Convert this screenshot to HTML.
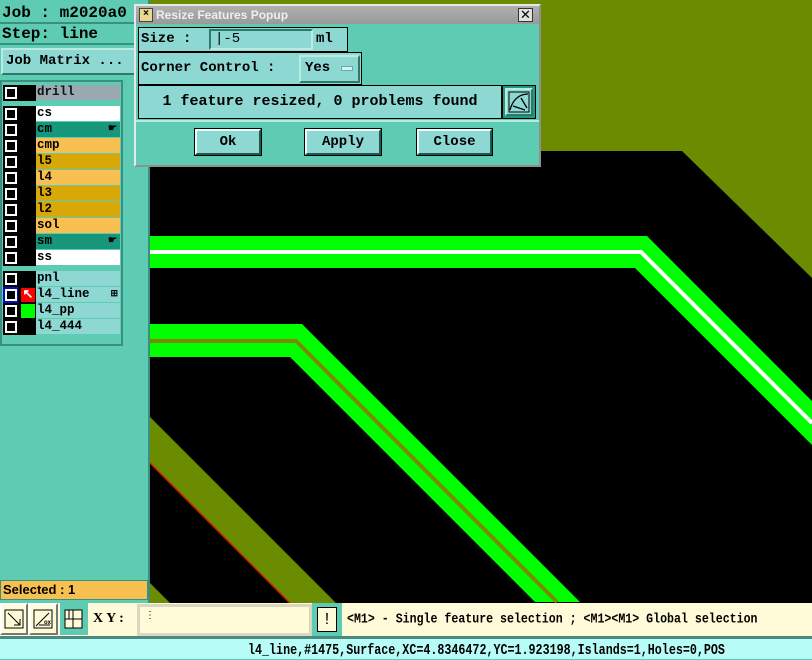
<!DOCTYPE html>
<html><head><meta charset="utf-8"><style>
*{margin:0;padding:0;box-sizing:border-box}
body{width:812px;height:659px;overflow:hidden;background:#5ecbb3;position:relative;font-family:"Liberation Mono",monospace;font-weight:bold;color:#000}
.a{position:absolute}
.bev{border:2px solid;border-color:#b8ece0 #2e7a68 #2e7a68 #b8ece0}
.sunk{border:2px solid;border-color:#2e7a68 #b8ece0 #b8ece0 #2e7a68}
.row{position:absolute;left:2px;width:118px;height:16px}
.cb{position:absolute;left:1px;top:0px;width:15px;height:16px;background:#000}
.cb i{position:absolute;left:2px;top:2px;width:12px;height:12px;background:#000;border:2px solid #fff;display:block}
.blk{position:absolute;left:16px;top:0;width:18px;height:16px;background:#000}
.nm{position:absolute;left:34px;top:0;width:84px;height:15px;font-size:12.5px;line-height:15px;padding-left:1px}
.btn{position:absolute;height:26px;background:#8ed8d4;border:2px solid;border-color:#e0fffa #1a5a50 #1a5a50 #e0fffa;outline:1px solid #000;font-size:14px;text-align:center;line-height:22px}
</style></head><body>
<svg class="a" style="left:150px;top:0" width="662" height="604" viewBox="150 0 662 604">
<rect x="150" y="0" width="662" height="604" fill="#000"/>
<polygon points="150,0 812,0 812,278 682,151 150,151" fill="#6b8c00"/>
<polygon points="150,236 647,236 812,401 812,445 635,268 150,268" fill="#00ff00"/>
<polyline points="150,252 641,252 812,423" fill="none" stroke="#fff" stroke-width="4"/>
<polygon points="150,324 302,324 580,602 535,602 290,357 150,357" fill="#00ff00"/>
<polyline points="150,341 296,341 557,602" fill="none" stroke="#7a8a00" stroke-width="4"/>
<polygon points="150,417 337,604 290,604 150,463" fill="#6b8c00"/>
<line x1="150" y1="463" x2="291" y2="604" stroke="#d02000" stroke-width="1.5"/>
<polygon points="150,583 171,604 150,604" fill="#6b8c00"/>
</svg>
<div class="a" style="left:0;top:0;width:150px;height:604px;background:#5ecbb3;border-right:2px solid #3a8f7e"></div>
<div class="a" style="left:2px;top:3px;font-size:16px;line-height:20px">Job : m2020a0</div>
<div class="a" style="left:0;top:22px;width:148px;height:2px;background:#3a8f7e"></div>
<div class="a" style="left:2px;top:24px;font-size:16px;line-height:20px">Step: line</div>
<div class="a" style="left:0;top:43px;width:148px;height:2px;background:#3a8f7e"></div>
<div class="a bev" style="left:1px;top:48px;width:135px;height:27px;font-size:14px;line-height:22px;padding-left:3px;background:#8ed8d4;white-space:nowrap">Job Matrix ...</div>
<div class="a" style="left:0;top:80px;width:123px;height:266px;border:2px solid #3a8f7e;background:#5ecbb3"></div>
<div class="row" style="top:85px"><div class="cb"><i></i></div><div class="blk"></div><div class="nm" style="background:#9aa8b0;color:#111">drill</div></div>
<div class="row" style="top:106px"><div class="cb"><i></i></div><div class="blk"></div><div class="nm" style="background:#fff">cs</div></div>
<div class="row" style="top:122px"><div class="cb"><i></i></div><div class="blk"></div><div class="nm" style="background:#16967a">cm<span style="position:absolute;right:3px;font-size:10px">&#9755;</span></div></div>
<div class="row" style="top:138px"><div class="cb"><i></i></div><div class="blk"></div><div class="nm" style="background:#f8c050">cmp</div></div>
<div class="row" style="top:154px"><div class="cb"><i></i></div><div class="blk"></div><div class="nm" style="background:#d8a808">l5</div></div>
<div class="row" style="top:170px"><div class="cb"><i></i></div><div class="blk"></div><div class="nm" style="background:#f8c050">l4</div></div>
<div class="row" style="top:186px"><div class="cb"><i></i></div><div class="blk"></div><div class="nm" style="background:#d8a808">l3</div></div>
<div class="row" style="top:202px"><div class="cb"><i></i></div><div class="blk"></div><div class="nm" style="background:#d8a808">l2</div></div>
<div class="row" style="top:218px"><div class="cb"><i></i></div><div class="blk"></div><div class="nm" style="background:#f8c050">sol</div></div>
<div class="row" style="top:234px"><div class="cb"><i></i></div><div class="blk"></div><div class="nm" style="background:#16967a">sm<span style="position:absolute;right:3px;font-size:10px">&#9755;</span></div></div>
<div class="row" style="top:250px"><div class="cb"><i></i></div><div class="blk"></div><div class="nm" style="background:#fff">ss</div></div>
<div class="row" style="top:271px"><div class="cb"><i></i></div><div class="blk"></div><div class="nm" style="background:#8ed8d4">pnl</div></div>
<div class="row" style="top:287px"><div class="cb" style="background:#0010c0"><i></i></div><div class="blk"><div class="a" style="left:3px;top:1px;width:14px;height:14px;background:#f00;color:#fff;font-size:13px;line-height:13px;text-align:center">&#8598;</div></div><div class="nm" style="background:#8ed8d4">l4_line<span style="position:absolute;right:2px;font-size:9px">&#8862;</span></div></div>
<div class="row" style="top:303px"><div class="cb"><i></i></div><div class="blk"><div class="a" style="left:3px;top:1px;width:14px;height:14px;background:#00ff00"></div></div><div class="nm" style="background:#8ed8d4">l4_pp</div></div>
<div class="row" style="top:319px"><div class="cb"><i></i></div><div class="blk"></div><div class="nm" style="background:#8ed8d4">l4_444</div></div>
<div class="a" style="left:0;top:580px;width:148px;height:20px;background:#f8c050;border:1px solid #3a8f7e;font-size:13px;line-height:18px;padding-left:2px;font-family:'Liberation Sans Narrow','Liberation Sans',sans-serif">Selected : 1</div>
<div class="a" style="left:134px;top:4px;width:407px;height:163px;background:#5ecbb3;border:2px solid;border-color:#e8e8e8 #909090 #909090 #e8e8e8"></div>
<div class="a" style="left:136px;top:6px;width:403px;height:18px;background:linear-gradient(#b0b0b0,#9a9a9a)"></div>
<div class="a" style="left:139px;top:8px;width:14px;height:14px;background:#e8d890;border:1px solid #444;font-size:10px;line-height:12px;text-align:center">&#215;</div>
<div class="a" style="left:156px;top:7px;color:#eeeeee;font-family:'Liberation Sans',sans-serif;font-size:12px;line-height:16px">Resize Features Popup</div>
<div class="a" style="left:518px;top:8px;width:15px;height:14px;background:#e0e0e0;border:1px solid #333;font-family:'Liberation Sans',sans-serif;font-size:13px;line-height:12px;text-align:center;font-weight:normal">&#10005;</div>
<div class="a" style="left:138px;top:27px;width:210px;height:25px;border:1px solid #000;background:#8ed8d4"></div>
<div class="a" style="left:141px;top:31px;font-size:14px;line-height:16px">Size :</div>
<div class="a sunk" style="left:209px;top:29px;width:104px;height:21px;background:#8ed8d4;font-size:14px;line-height:16px;padding-left:4px;font-weight:normal">|-5</div>
<div class="a" style="left:316px;top:31px;font-size:14px;line-height:16px">ml</div>
<div class="a" style="left:138px;top:52px;width:224px;height:33px;border:1px solid #000;background:#8ed8d4"></div>
<div class="a" style="left:141px;top:60px;font-size:14px;line-height:16px">Corner Control :</div>
<div class="a bev" style="left:299px;top:55px;width:61px;height:28px;background:#8ed8d4;font-size:14px;line-height:23px;padding-left:4px">Yes<span class="a" style="left:40px;top:9px;width:12px;height:5px;background:#d8f0ee;border:1px solid #6aa"></span></div>
<div class="a" style="left:138px;top:85px;width:364px;height:34px;border:1px solid #000;background:#8ed8d4;font-size:15px;line-height:32px;text-align:center">1 feature resized, 0 problems found</div>
<div class="a" style="left:502px;top:85px;width:34px;height:34px;border:1px solid #000;background:#1f9a80"></div>
<div class="a bev" style="left:505px;top:88px;width:28px;height:28px;background:#8ed8d4"><svg width="24" height="24"><path d="M3 20 C6 8 14 4 21 4 M6 16 L18 20 M14 8 L20 18" fill="none" stroke="#000" stroke-width="1.3"/><rect x="2" y="2" width="20" height="20" fill="none" stroke="#000"/></svg></div>
<div class="a" style="left:136px;top:120px;width:403px;height:2px;background:#b8ece0"></div>
<div class="btn" style="left:195px;top:129px;width:66px">Ok</div>
<div class="btn" style="left:305px;top:129px;width:76px">Apply</div>
<div class="btn" style="left:417px;top:129px;width:75px">Close</div>
<div class="a" style="left:0;top:603px;width:812px;height:34px;background:#fffbd8"></div>
<div class="a" style="left:0;top:603px;width:28px;height:32px;border:2px solid;border-color:#fff #777 #777 #fff;background:#fffbd8"><svg width="24" height="28"><rect x="3" y="5" width="18" height="18" fill="none" stroke="#000"/><path d="M6 8 L18 20 M18 14 L18 20 L12 20" fill="none" stroke="#000"/></svg></div>
<div class="a" style="left:29px;top:603px;width:29px;height:32px;border:2px solid;border-color:#fff #777 #777 #fff;background:#fffbd8"><svg width="25" height="28"><rect x="3" y="5" width="18" height="18" fill="none" stroke="#000"/><path d="M5 21 L18 8 M8 20 L19 20" fill="none" stroke="#000"/><text x="13" y="19" font-size="6" font-family="Liberation Sans">ox</text></svg></div>
<div class="a" style="left:60px;top:603px;width:28px;height:32px;background:#5ecbb3;padding:4px"><svg width="20" height="24"><rect x="1" y="3" width="17" height="18" fill="#fffbd8" stroke="#000"/><path d="M9 3 V21 M1 12 H18 M5 3 V12" stroke="#000" fill="none"/></svg></div>
<div class="a" style="left:93px;top:610px;font-size:14px;line-height:18px;font-family:'Liberation Serif',serif">X Y :</div>
<div class="a" style="left:137px;top:604px;width:175px;height:32px;border:3px solid #d8d8c0;background:#fffbd8"><span class="a" style="left:5px;top:3px;font-size:10px;font-weight:normal">&#8942;</span></div>
<div class="a" style="left:312px;top:603px;width:30px;height:33px;background:#5ecbb3;padding:4px 5px"><div style="width:20px;height:25px;border:1px solid #000;background:#fffbd8;text-align:center;font-family:'Liberation Sans',sans-serif;font-size:16px;line-height:23px;font-weight:normal">!</div></div>
<div class="a" style="left:347px;top:612px;font-size:11.6px;line-height:16px;transform:scaleY(1.2);transform-origin:0 50%">&lt;M1&gt; - Single feature selection ; &lt;M1&gt;&lt;M1&gt; Global selection</div>
<div class="a" style="left:0;top:636px;width:812px;height:3px;background:#4a8a80"></div>
<div class="a" style="left:0;top:639px;width:812px;height:20px;background:#b8fcf8"></div>
<div class="a" style="left:248px;top:642px;font-size:11.7px;line-height:16px;transform:scaleY(1.25);transform-origin:0 50%">l4_line,#1475,Surface,XC=4.8346472,YC=1.923198,Islands=1,Holes=0,POS</div>
</body></html>
